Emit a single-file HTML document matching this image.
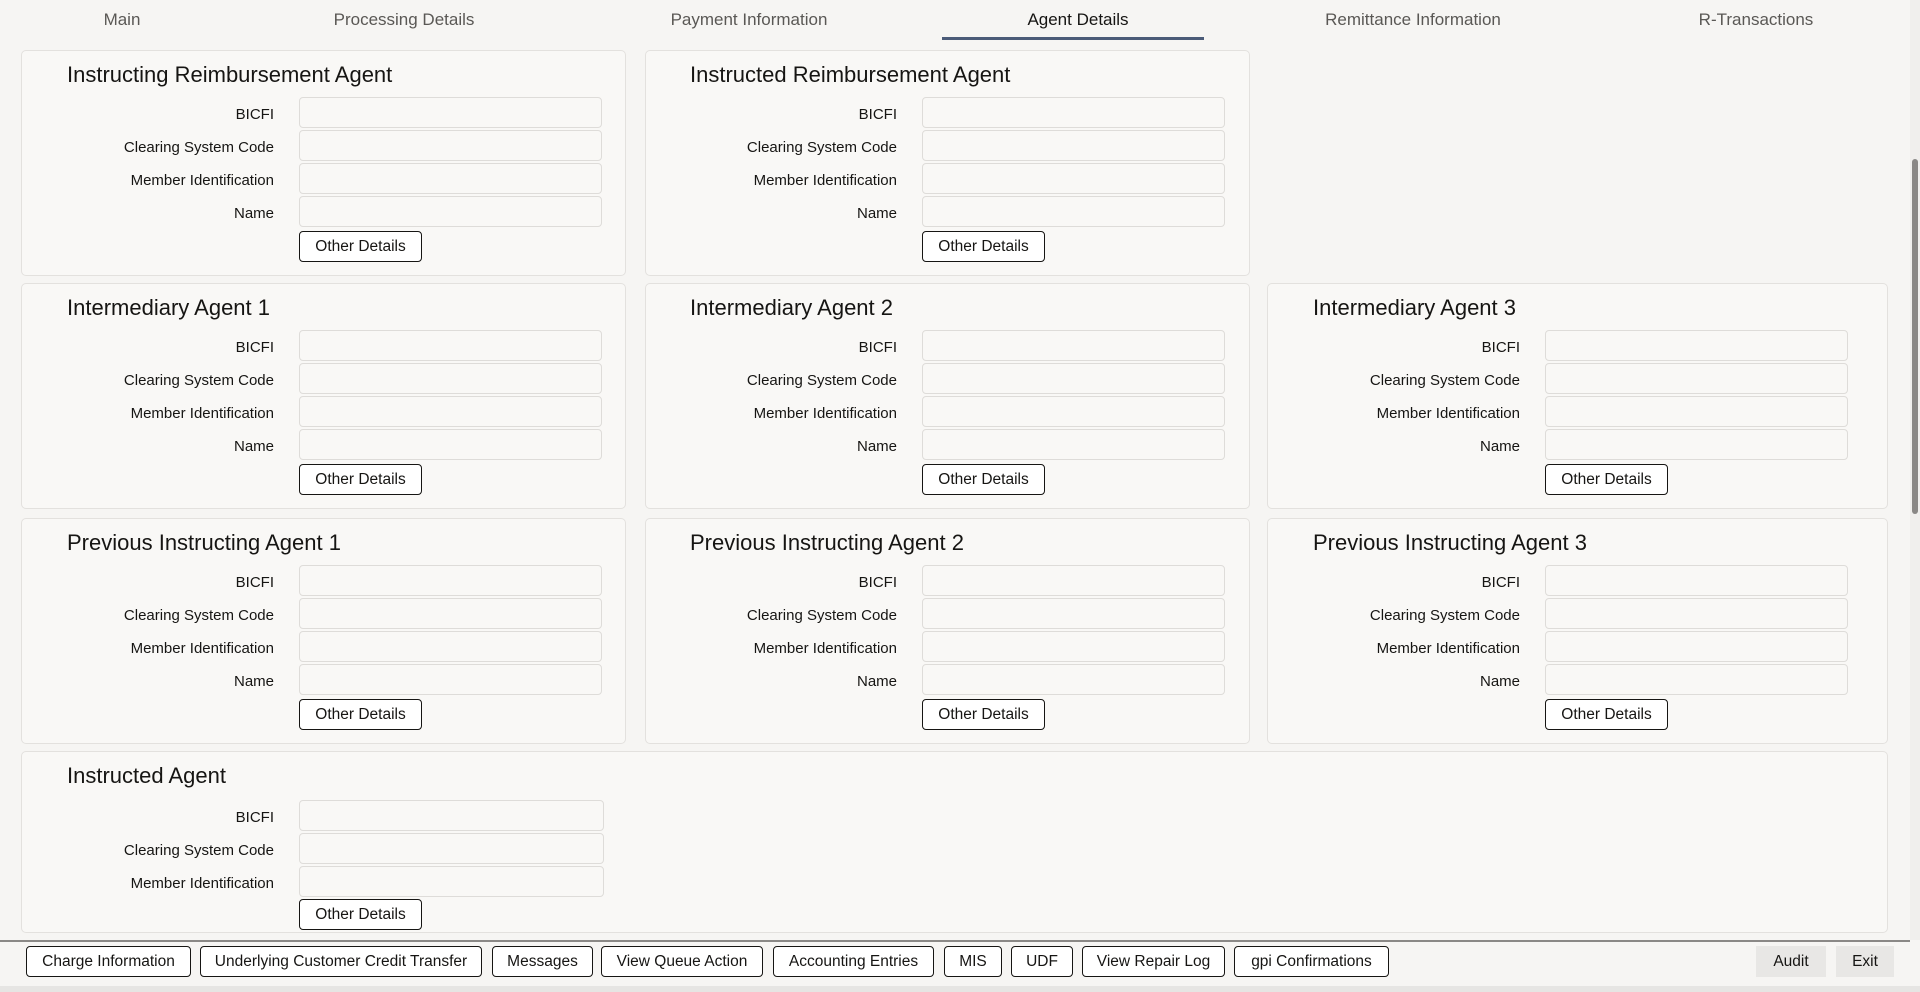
<!DOCTYPE html>
<html><head><meta charset="utf-8"><style>
*{box-sizing:border-box;margin:0;padding:0}
body{width:1920px;height:992px;overflow:hidden;background:#f6f5f3;font-family:"Liberation Sans",sans-serif;color:#161513;position:relative}
.tab{position:absolute;top:10px;font-size:17px;color:#5a5855;transform:translateX(-50%);white-space:nowrap}
.tab.act{color:#161513}
.ul{position:absolute;left:942px;width:262px;top:37px;height:3px;background:#4b5b78}
.panel{position:absolute;background:#f9f8f6;border:1px solid #e3e1de;border-radius:5px}
.title{position:absolute;left:45px;top:11px;font-size:22px;white-space:nowrap}
.lab{position:absolute;left:30px;width:222px;text-align:right;font-size:15px;white-space:nowrap}
.inp{position:absolute;left:277px;width:303px;height:31px;border:1px solid #dedcd9;border-radius:4px;background:#f9f8f6}
.btn{position:absolute;left:277px;width:123px;height:31px;border:1px solid #161513;border-radius:4px;background:#fff;font-size:15.5px;text-align:center;line-height:29px}
.fb{position:absolute;top:946px;height:31px;border:1px solid #161513;border-radius:4px;background:#fff;font-size:15.5px;text-align:center;line-height:29px;white-space:nowrap}
.gb{position:absolute;top:946px;height:31px;background:#e8e7e5;font-size:15.5px;text-align:center;line-height:31px}
</style></head><body>
<div class="tab" style="left:122px">Main</div>
<div class="tab" style="left:404px">Processing Details</div>
<div class="tab" style="left:749px">Payment Information</div>
<div class="tab act" style="left:1078px">Agent Details</div>
<div class="tab" style="left:1413px">Remittance Information</div>
<div class="tab" style="left:1756px">R-Transactions</div>
<div class="ul"></div>

<div id="p"></div>
<script>
const cols=[21,645,1267],rows=[50,283,518];
const names=[["Instructing Reimbursement Agent","Instructed Reimbursement Agent",null],["Intermediary Agent 1","Intermediary Agent 2","Intermediary Agent 3"],["Previous Instructing Agent 1","Previous Instructing Agent 2","Previous Instructing Agent 3"]];
const labs=["BICFI","Clearing System Code","Member Identification","Name"];
let h="";
rows.forEach((y,r)=>cols.forEach((x,c)=>{
 const n=names[r][c]; if(!n) return;
 const w=c==2?621:605;
 const dx=c==1?-1:0;
 h+=`<div class="panel" style="left:${x}px;top:${y}px;width:${w}px;height:226px"><div class="title" style="left:${45+dx}px">${n}</div>`;
 labs.forEach((l,i)=>{h+=`<div class="lab" style="top:${55+i*33}px;left:${30+dx}px">${l}</div><div class="inp" style="top:${46+i*33}px;left:${277+dx}px"></div>`;});
 h+=`<div class="btn" style="top:180px;left:${277+dx}px">Other Details</div></div>`;
}));
h+=`<div class="panel" style="left:21px;top:751px;width:1867px;height:182px"><div class="title">Instructed Agent</div>`;
labs.slice(0,3).forEach((l,i)=>{h+=`<div class="lab" style="top:${57+i*33}px">${l}</div><div class="inp" style="top:${48+i*33}px;width:305px"></div>`;});
h+=`<div class="btn" style="top:147px">Other Details</div></div>`;
document.getElementById("p").innerHTML=h;
</script>

<div style="position:absolute;left:0;top:940px;width:1910px;height:2px;background:#8a8886"></div>
<div class="fb" style="left:26px;width:165px">Charge Information</div>
<div class="fb" style="left:200px;width:282px">Underlying Customer Credit Transfer</div>
<div class="fb" style="left:492px;width:101px">Messages</div>
<div class="fb" style="left:601px;width:162px">View Queue Action</div>
<div class="fb" style="left:773px;width:161px">Accounting Entries</div>
<div class="fb" style="left:944px;width:58px">MIS</div>
<div class="fb" style="left:1011px;width:62px">UDF</div>
<div class="fb" style="left:1082px;width:143px">View Repair Log</div>
<div class="fb" style="left:1234px;width:155px">gpi Confirmations</div>
<div class="gb" style="left:1756px;width:70px">Audit</div>
<div class="gb" style="left:1836px;width:58px">Exit</div>
<div style="position:absolute;left:0;top:986px;width:1920px;height:6px;background:#e6e5e3"></div>
<div style="position:absolute;left:1910px;top:0;width:10px;height:940px;background:#f0efed"></div>
<div style="position:absolute;left:1912px;top:159px;width:6px;height:355px;background:#8a8886;border-radius:3px"></div>
</body></html>
